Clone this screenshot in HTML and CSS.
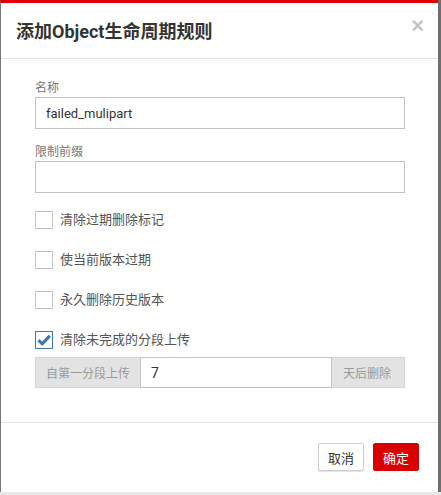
FILE: index.html
```html
<!DOCTYPE html>
<html lang="zh-CN">
<head>
<meta charset="utf-8">
<title>添加Object生命周期规则</title>
<link rel="stylesheet" href="styles.css">
</head>
<body>
<div class="page">
  <div class="modal">
    <div class="modal-header">
      <h4 class="modal-title">添加Object生命周期规则</h4>
      <button class="close" type="button">×</button>
    </div>
    <div class="modal-body">
      <div class="field">
        <label class="field-label">名称</label>
        <input class="text-input" type="text" value="failed_mulipart">
      </div>
      <div class="field">
        <label class="field-label">限制前缀</label>
        <input class="text-input" type="text" value="">
      </div>
      <div class="checks">
        <div class="check-row"><span class="box"></span><span class="check-label">清除过期删除标记</span></div>
        <div class="check-row"><span class="box"></span><span class="check-label">使当前版本过期</span></div>
        <div class="check-row"><span class="box"></span><span class="check-label">永久删除历史版本</span></div>
        <div class="check-row"><span class="box checked"><svg width="16" height="16" viewBox="0 0 16 16"><path d="M2.5 8.2 L6.2 11.8 L13.8 3.8" fill="none" stroke="#3a78b6" stroke-width="3.2" stroke-linejoin="miter" stroke-linecap="butt"/></svg></span><span class="check-label">清除未完成的分段上传</span></div>
      </div>
      <div class="input-group">
        <span class="addon addon-left">自第一分段上传</span>
        <input class="group-input" type="text" value="7">
        <span class="addon addon-right">天后删除</span>
      </div>
    </div>
    <div class="modal-footer">
      <button class="btn btn-default" type="button">取消</button>
      <button class="btn btn-primary" type="button">确定</button>
    </div>
  </div>
  <div class="scroll-strip"></div>
</div>
</body>
</html>
```
FILE: styles.css
```css
html, body {
  margin: 0;
  padding: 0;
}
body {
  width: 441px;
  height: 495px;
  overflow: hidden;
  background: #e8e8e8;
  font-family: Roboto, "Noto Sans CJK SC", sans-serif;
}
.page {
  display: flex;
  height: 492px;
}
.modal {
  width: 437px;
  border-left: 1px solid #7a7a7a;
  border-top: 3px solid #e00000;
  background: #fff;
  display: flex;
  flex-direction: column;
}
.scroll-strip {
  width: 3px;
  background: #6e6e6e;
}
.modal-header {
  height: 56px;
  box-sizing: border-box;
  border-bottom: 1px solid #e5e5e5;
  display: flex;
  align-items: center;
  justify-content: space-between;
  padding: 0 14px 0 15px;
}
.modal-title {
  margin: 0;
  font-size: 18px;
  font-weight: bold;
  color: #333;
  line-height: 26px;
  padding-top: 2px;
}
.close {
  border: 0;
  background: none;
  padding: 0;
  font-family: "Liberation Sans", sans-serif;
  font-size: 22px;
  font-weight: bold;
  line-height: 20px;
  color: #c4c4c4;
  margin-top: -10px;
}
.modal-body {
  height: 364px;
  box-sizing: border-box;
  padding: 21px 33px 0 34px;
  border-bottom: 1px solid #e5e5e5;
}
.field {
  display: flex;
  flex-direction: column;
  margin-bottom: 15px;
}
.field-label {
  font-size: 12px;
  line-height: 17px;
  color: #777;
}
.text-input {
  height: 32px;
  box-sizing: border-box;
  border: 1px solid #c2c2c2;
  padding: 0 10px;
  font-family: Roboto, "Noto Sans CJK SC", sans-serif;
  font-size: 13px;
  color: #333;
  outline: none;
  margin: 0;
}
.checks {
  margin-top: 18px;
  display: flex;
  flex-direction: column;
  gap: 22px;
}
.check-row {
  display: flex;
  align-items: center;
  height: 18px;
}
.box {
  width: 18px;
  height: 18px;
  box-sizing: border-box;
  border: 1px solid #c4c4c4;
  display: flex;
  align-items: center;
  justify-content: center;
  margin-right: 7px;
  background: #fff;
}
.box.checked {
  border-color: #3a78b6;
}
.check-label {
  font-size: 13px;
  color: #555;
  line-height: 18px;
}
.input-group {
  margin-top: 8px;
  display: flex;
  height: 31px;
}
.addon {
  flex: none;
  white-space: nowrap;
  background: #e3e3e3;
  border: 1px solid #d6d6d6;
  color: #9a9a9a;
  font-size: 12px;
  display: flex;
  align-items: center;
  box-sizing: border-box;
  padding: 0 10px;
}
.addon-left {
  border-right: 0;
}
.addon-right {
  border-left: 0;
  padding: 0 13px 0 11px;
}
.group-input {
  flex: 1;
  min-width: 0;
  height: 31px;
  box-sizing: border-box;
  border: 1px solid #c2c2c2;
  margin: 0;
  padding: 0 10px;
  font-family: Roboto, "Noto Sans CJK SC", sans-serif;
  font-size: 14px;
  color: #333;
  outline: none;
}
.modal-footer {
  flex: 1;
  display: flex;
  justify-content: flex-end;
  align-items: flex-start;
  gap: 9px;
  padding: 20px 19px 0 0;
}
.btn {
  height: 28px;
  box-sizing: border-box;
  padding: 0 9px;
  font-family: Roboto, "Noto Sans CJK SC", sans-serif;
  font-size: 13px;
  border-radius: 2px;
  margin: 0;
  cursor: pointer;
}
.btn-default {
  background: #fff;
  color: #333;
  border: 1px solid #cfcfcf;
  box-shadow: 0 1px 1px rgba(0, 0, 0, 0.12);
}
.btn-primary {
  background: #d90000;
  color: #fff;
  border: 1px solid #d90000;
}
```
